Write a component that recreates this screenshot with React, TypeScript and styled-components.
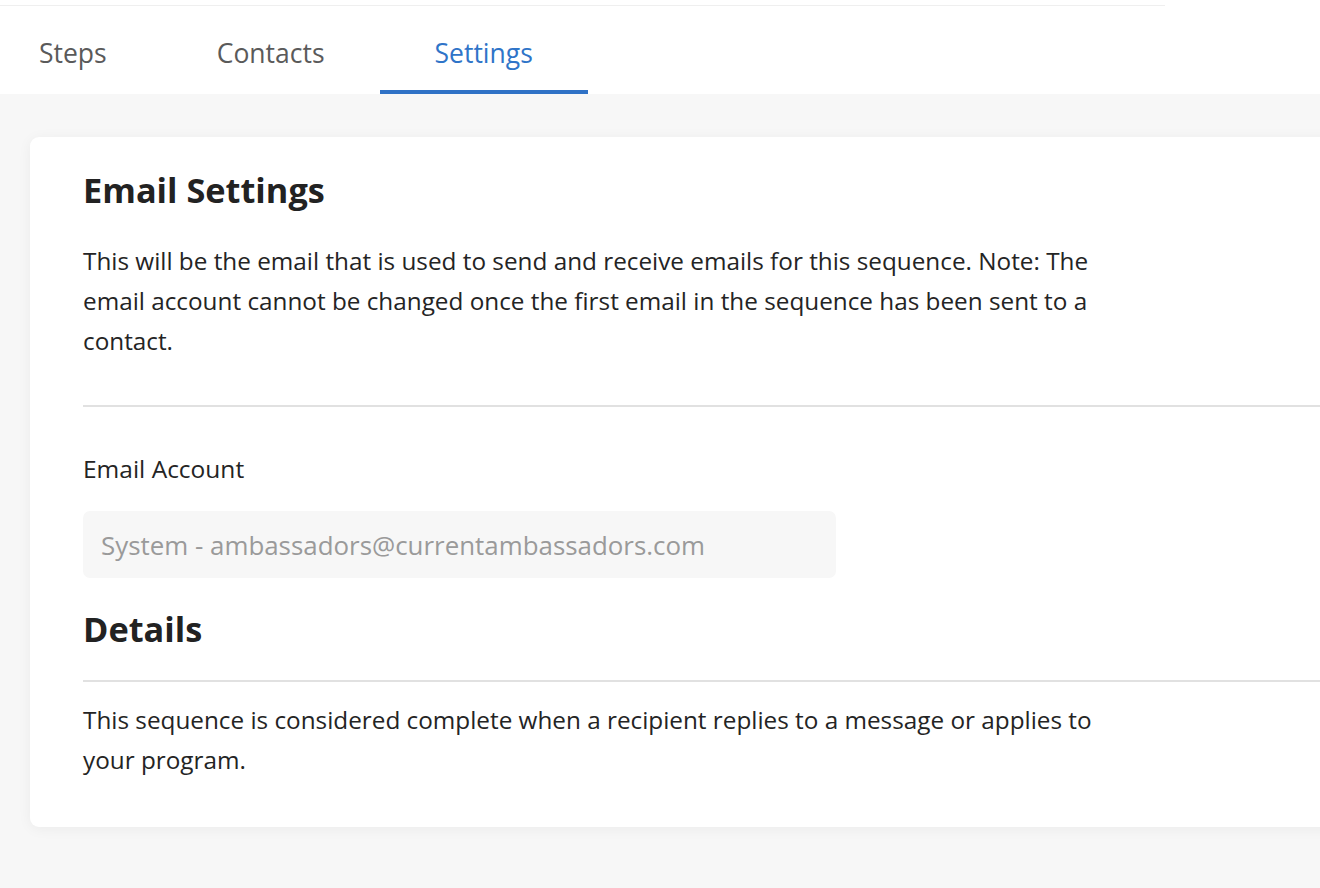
import { FC, useState } from 'react';
import styled, { createGlobalStyle } from 'styled-components';

const GlobalStyle = createGlobalStyle`
  html, body {
    margin: 0;
    padding: 0;
    background: #f7f7f7;
    overflow: hidden;
  }
  body {
    font-family: "Open Sans", "Noto Sans", Lato, sans-serif;
    color: #232323;
  }
`;

type TabKey = 'steps' | 'contacts' | 'settings';

const TABS: { key: TabKey; label: string }[] = [
  { key: 'steps', label: 'Steps' },
  { key: 'contacts', label: 'Contacts' },
  { key: 'settings', label: 'Settings' },
];

const Page = styled.div`
  min-height: 100vh;
  background: #f7f7f7;
`;

const Header = styled.header`
  background: #fff;
  height: 94px;
  padding-top: 5px;
  box-sizing: border-box;
`;

const TabStrip = styled.nav`
  width: 1181px;
  height: 89px;
  display: flex;
  align-items: stretch;
  border-top: 1px solid #efefef;
  margin-left: -16px;
  box-sizing: border-box;
`;

const Tab = styled.button<{ active?: boolean }>`
  appearance: none;
  background: none;
  border: 0;
  margin: 0;
  padding: 10px 55px 0;
  font-family: inherit;
  font-size: 26.5px;
  line-height: 34px;
  text-align: center;
  color: ${(props) => (props.active ? '#2f74c8' : '#5a5a5a')};
  border-bottom: 4px solid ${(props) => (props.active ? '#2f72c6' : 'transparent')};
  cursor: pointer;
`;

const Content = styled.main`
  padding: 43px 0 0 30px;
`;

const Card = styled.section`
  width: 1320px;
  background: #fff;
  border-radius: 9px;
  box-shadow: 0 2px 14px rgba(0, 0, 0, 0.05);
  padding: 31px 0 47px 53px;
  box-sizing: border-box;
`;

const Heading = styled.h2`
  margin: 0;
  font-size: 34.3px;
  font-weight: 700;
  line-height: 44px;
  color: #222;
`;

const Body = styled.p`
  margin: 0;
  max-width: 1035px;
  font-size: 24.3px;
  line-height: 40px;
  color: #242424;
`;

const Divider = styled.hr`
  border: 0;
  border-top: 2px solid #e1e1e1;
  margin: 0;
`;

const Label = styled.label`
  display: block;
  font-size: 24.5px;
  line-height: 40px;
  color: #242424;
`;

const Input = styled.input`
  display: block;
  width: 753px;
  height: 67px;
  box-sizing: border-box;
  border: 0;
  border-radius: 7px;
  background: #f7f7f7;
  padding: 0 18px;
  font-family: inherit;
  font-size: 25.9px;
  color: #9a9a9a;
  outline: none;
  &::placeholder {
    color: #9a9a9a;
  }
`;

const EmailSection = styled.div`
  display: flex;
  flex-direction: column;
  ${Body} {
    margin-top: 29px;
  }
  ${Divider} {
    margin-top: 44px;
  }
  ${Label} {
    margin-top: 42px;
  }
  ${Input} {
    margin-top: 22px;
  }
`;

const DetailsSection = styled.div`
  display: flex;
  flex-direction: column;
  margin-top: 29px;
  ${Divider} {
    margin-top: 29px;
  }
  ${Body} {
    margin-top: 18px;
  }
`;

const App: FC = () => {
  const [tab, setTab] = useState<TabKey>('settings');

  return (
    <Page>
      <GlobalStyle />
      <Header>
        <TabStrip>
          {TABS.map((t) => (
            <Tab key={t.key} active={t.key === tab} onClick={() => setTab(t.key)}>
              {t.label}
            </Tab>
          ))}
        </TabStrip>
      </Header>
      <Content>
        <Card>
          <EmailSection>
            <Heading>Email Settings</Heading>
            <Body>
              This will be the email that is used to send and receive emails for this sequence. Note: The
              email account cannot be changed once the first email in the sequence has been sent to a
              contact.
            </Body>
            <Divider />
            <Label htmlFor="email-account">Email Account</Label>
            <Input
              id="email-account"
              disabled
              placeholder="System - ambassadors@currentambassadors.com"
            />
          </EmailSection>
          <DetailsSection>
            <Heading>Details</Heading>
            <Divider />
            <Body>
              This sequence is considered complete when a recipient replies to a message or applies to
              your program.
            </Body>
          </DetailsSection>
        </Card>
      </Content>
    </Page>
  );
};

export default App;
